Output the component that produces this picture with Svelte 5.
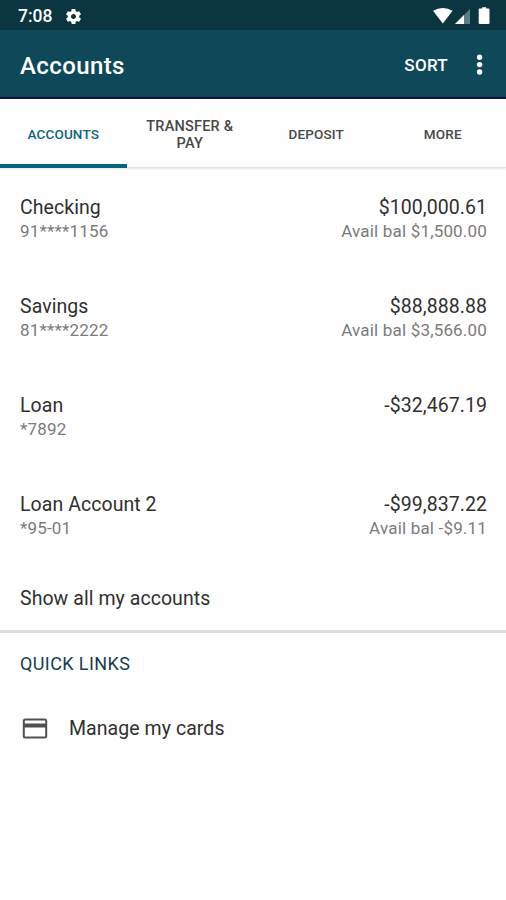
<script>
  const tabs = [['ACCOUNTS'], ['TRANSFER &', 'PAY'], ['DEPOSIT'], ['MORE']];
  const accounts = [
    { name: 'Checking', number: '91****1156', balance: '$100,000.61', available: 'Avail bal $1,500.00' },
    { name: 'Savings', number: '81****2222', balance: '$88,888.88', available: 'Avail bal $3,566.00' },
    { name: 'Loan', number: '*7892', balance: '-$32,467.19', available: '' },
    { name: 'Loan Account 2', number: '*95-01', balance: '-$99,837.22', available: 'Avail bal -$9.11' }
  ];
  let active = $state(0);
</script>

<div class="screen">
  <div class="status">
    <span class="time">7:08</span>
    <svg class="gear" width="19" height="19" viewBox="0 0 24 24" fill="#fff"><path d="M19.14 12.94c.04-.3.06-.61.06-.94 0-.32-.02-.64-.07-.94l2.03-1.58c.18-.14.23-.41.12-.61l-1.92-3.32c-.12-.22-.37-.29-.59-.22l-2.39.96c-.5-.38-1.03-.7-1.62-.94l-.36-2.54c-.04-.24-.24-.41-.48-.41h-3.84c-.24 0-.43.17-.47.41l-.36 2.54c-.59.24-1.13.57-1.62.94l-2.39-.96c-.22-.08-.47 0-.59.22L2.74 8.87c-.12.21-.08.47.12.61l2.03 1.58c-.05.3-.09.63-.09.94s.02.64.07.94l-2.03 1.58c-.18.14-.23.41-.12.61l1.92 3.32c.12.22.37.29.59.22l2.39-.96c.5.38 1.03.7 1.62.94l.36 2.54c.05.24.24.41.48.41h3.84c.24 0 .44-.17.47-.41l.36-2.54c.59-.24 1.13-.56 1.62-.94l2.39.96c.22.08.47 0 .59-.22l1.92-3.32c.12-.22.07-.47-.12-.61l-2.01-1.58zM12 15.200c-1.760 0-3.200-1.440-3.200-3.200s1.440-3.200 3.200-3.200 3.200 1.440 3.200 3.200-1.440 3.200-3.200 3.200z" /></svg>
    <svg class="signals" width="60" height="20" viewBox="0 0 60 20" fill="#fff">
      <path d="M2 4.800Q11.800-.800 21.600 4.800L11.800 17.500z" />
      <path d="M39 3V18H24z" opacity=".35" />
      <path d="M33 9V18H24z" />
      <path d="M48.700 2.500h2.500V1.200h4v1.300h2.300q1 0 1 1v13.500q0 1-1 1h-8.800q-1 0-1-1v-13.500q0-1 1-1z" />
    </svg>
  </div>

  <header>
    <h1>Accounts</h1>
    <button class="sort">SORT</button>
    <button class="menu" aria-label="More options">
      <svg width="8" height="24" viewBox="0 0 8 24" fill="#fff"><circle cx="3.600" cy="4.200" r="2.700" /><circle cx="3.600" cy="11.600" r="2.700" /><circle cx="3.600" cy="19" r="2.700" /></svg>
    </button>
  </header>

  <nav>
    {#each tabs as lines, i}
      <button class="tab" class:active={active === i} class:tall={lines.length > 1} onclick={() => (active = i)}>
        {#each lines as line}<span>{line}</span>{/each}
      </button>
    {/each}
  </nav>

  <main>
    {#each accounts as a}
      <div class="account">
        <div class="row main-row"><span>{a.name}</span><span>{a.balance}</span></div>
        <div class="row sub-row"><span>{a.number}</span><span>{a.available}</span></div>
      </div>
    {/each}
    <div class="all">Show all my accounts</div>
    <section>
      <h2>QUICK LINKS</h2>
      <div class="link">
        <svg width="26" height="22" viewBox="0 0 26 22"><rect x="1.800" y="1.500" width="22.400" height="18" rx="1.500" fill="none" stroke="#505050" stroke-width="2" /><path d="M1.500 5.500h23v4h-23z" fill="#505050" /></svg>
        <span>Manage my cards</span>
      </div>
    </section>
  </main>
</div>

<style>
  :global(body) { margin: 0; background: #fefefe; }
  .screen { width: 506px; height: 900px; overflow: hidden; background: #fefefe; color: #303030; font-family: Roboto, sans-serif; }
  button { border: 0; padding: 0; background: none; font: inherit; color: inherit; }
  .status { display: flex; align-items: center; box-sizing: border-box; height: 30px; padding: 2px 15px 0 18px; background: #0b3540; color: #fff; }
  .time { width: 46px; font-size: 17.500px; font-weight: 500; letter-spacing: 0; }
  .signals { margin-left: auto; }
  header { display: flex; align-items: center; box-sizing: border-box; height: 69px; padding: 2px 22px 0 20px; background: #0e4859; border-bottom: 2px solid #090f3c; color: #fff; }
  h1 { margin: 0; padding-top: 2px; font-size: 24px; font-weight: 500; letter-spacing: .4px; line-height: 28px; }
  .sort { margin-left: auto; font-size: 17px; font-weight: 500; letter-spacing: .3px; }
  .menu { display: flex; margin-left: 28px; }
  nav { display: flex; height: 69px; box-sizing: border-box; border-bottom: 1px solid #e2e2e2; box-shadow: 0 1px 2px #e5e5e5; }
  .tab { flex: 1; height: 69px; box-sizing: border-box; display: flex; flex-direction: column; align-items: center; justify-content: center; border-bottom: 4px solid transparent; padding-top: 5px; font-size: 13.500px; font-weight: 500; line-height: 17px; letter-spacing: .15px; color: #484848; }
  .tab.tall { padding-top: 6px; font-size: 14.500px; letter-spacing: .2px; }
  .tab.active { color: #0d667d; border-color: #086580; }
  .account { height: 99px; box-sizing: border-box; padding: 28px 19px 0 20px; }
  .row { display: flex; justify-content: space-between; }
  .main-row, .all, .link { font-size: 19.500px; font-weight: 400; line-height: 26px; letter-spacing: .06px; }
  .main-row { line-height: 24px; }
  .sub-row { font-size: 17px; font-weight: 400; line-height: 23px; letter-spacing: .18px; color: #7b7b7b; }
  .all { box-sizing: border-box; height: 69px; padding: 22px 20px 0; border-bottom: 3px solid #ddd; }
  h2 { margin: 0; padding: 18px 20px 0; font-size: 18px; line-height: 26px; font-weight: 400; letter-spacing: .4px; color: #173d50; }
  .link { display: flex; align-items: center; gap: 21px; padding: 38px 22px 0; }
  .link span { padding-top: 1px; }
</style>
